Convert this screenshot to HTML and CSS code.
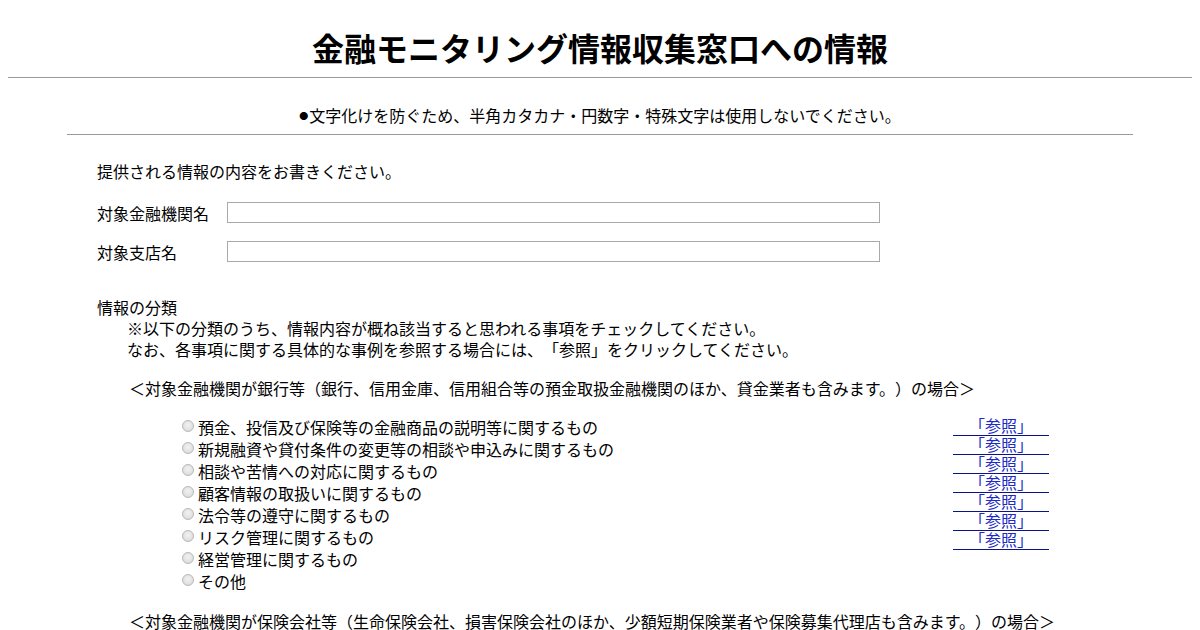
FILE: index.html
```html
<!DOCTYPE html>
<html lang="ja">
<head>
    <meta charset="UTF-8">
    <title>金融モニタリング情報収集窓口への情報</title>
    <link rel="stylesheet" href="styles.css">
</head>
<body>

    <h1>金融モニタリング情報収集窓口への情報</h1>
    <hr class="rule">

    <p class="notice"><span class="dot">●</span>文字化けを防ぐため、半角カタカナ・円数字・特殊文字は使用しないでください。</p>
    <hr class="rule short">

    <div class="content">
        <p class="lead">提供される情報の内容をお書きください。</p>

        <div class="field">
            <label for="bank">対象金融機関名</label>
            <input type="text" id="bank">
        </div>
        <div class="field">
            <label for="branch">対象支店名</label>
            <input type="text" id="branch">
        </div>

        <div class="section">
            <p>情報の分類</p>
            <p class="indent">※以下の分類のうち、情報内容が概ね該当すると思われる事項をチェックしてください。</p>
            <p class="indent">なお、各事項に関する具体的な事例を参照する場合には、「参照」をクリックしてください。</p>
        </div>

        <p class="group">＜対象金融機関が銀行等（銀行、信用金庫、信用組合等の預金取扱金融機関のほか、貸金業者も含みます。）の場合＞</p>

        <div class="choices">
            <ul class="radio-list">
                <li><label><input type="radio" name="kind">預金、投信及び保険等の金融商品の説明等に関するもの</label></li>
                <li><label><input type="radio" name="kind">新規融資や貸付条件の変更等の相談や申込みに関するもの</label></li>
                <li><label><input type="radio" name="kind">相談や苦情への対応に関するもの</label></li>
                <li><label><input type="radio" name="kind">顧客情報の取扱いに関するもの</label></li>
                <li><label><input type="radio" name="kind">法令等の遵守に関するもの</label></li>
                <li><label><input type="radio" name="kind">リスク管理に関するもの</label></li>
                <li><label><input type="radio" name="kind">経営管理に関するもの</label></li>
                <li><label><input type="radio" name="kind">その他</label></li>
            </ul>
            <ul class="ref-list">
                <li><a href="#">　「参照」　</a></li>
                <li><a href="#">　「参照」　</a></li>
                <li><a href="#">　「参照」　</a></li>
                <li><a href="#">　「参照」　</a></li>
                <li><a href="#">　「参照」　</a></li>
                <li><a href="#">　「参照」　</a></li>
                <li><a href="#">　「参照」　</a></li>
            </ul>
        </div>

        <p class="group">＜対象金融機関が保険会社等（生命保険会社、損害保険会社のほか、少額短期保険業者や保険募集代理店も含みます。）の場合＞</p>
    </div>

</body>
</html>
```

FILE: styles.css
```css
body { margin: 8px; font-family: "Noto Sans CJK JP", "Liberation Sans", sans-serif; font-size: 16px; line-height: 20px; color: #000; background: #fff; text-spacing-trim: space-all; }
p { margin: 0; }
h1 { margin: 21px 0 12px; font-size: 32px; line-height: 36px; font-weight: bold; text-align: center; }
.rule { border: 0; border-top: 1px solid #999; margin: 0 0 27px; height: 0; }
.rule.short { width: 90%; margin: 9px auto 0; }
.notice { text-align: center; }
.dot { font-size: 9px; line-height: 0; margin-right: 1px; vertical-align: 3px; }
.content { padding-left: 89px; }
.lead { margin-top: 26px; }
.field { display: flex; align-items: center; margin-top: 21px; height: 21px; }
.field + .field { margin-top: 18px; }
.field label { width: 130px; }
.field input { width: 653px; height: 21px; box-sizing: border-box; border: 1px solid #a9a9a9; margin: 0; padding: 0 2px; font-size: 14px; }
.section { margin-top: 35px; line-height: 21px; }
.indent { padding-left: 30px; }
.group { margin-top: 18px; padding-left: 32px; }
.choices { display: flex; margin-top: 18px; }
.radio-list, .ref-list { list-style: none; margin: 0; padding: 0; }
.radio-list { margin-left: 85px; width: 771px; }
.radio-list li { height: 22px; line-height: 22px; }
.radio-list label { display: flex; align-items: center; }
.radio-list input { appearance: none; -webkit-appearance: none; width: 12px; height: 12px; margin: 0 4px 0 0; border: 1px solid #b8b8b8; border-radius: 50%; background: radial-gradient(circle at 50% 40%, #f2f2f2, #d6d6d6); box-sizing: border-box; position: relative; top: -1px; }
.ref-list li { height: 19px; line-height: 19px; }
.ref-list a { color: #1c2bc4; text-decoration: underline; text-decoration-color: #0a1488; text-underline-offset: 3px; }
.choices + .group { margin-top: 19px; }
```
